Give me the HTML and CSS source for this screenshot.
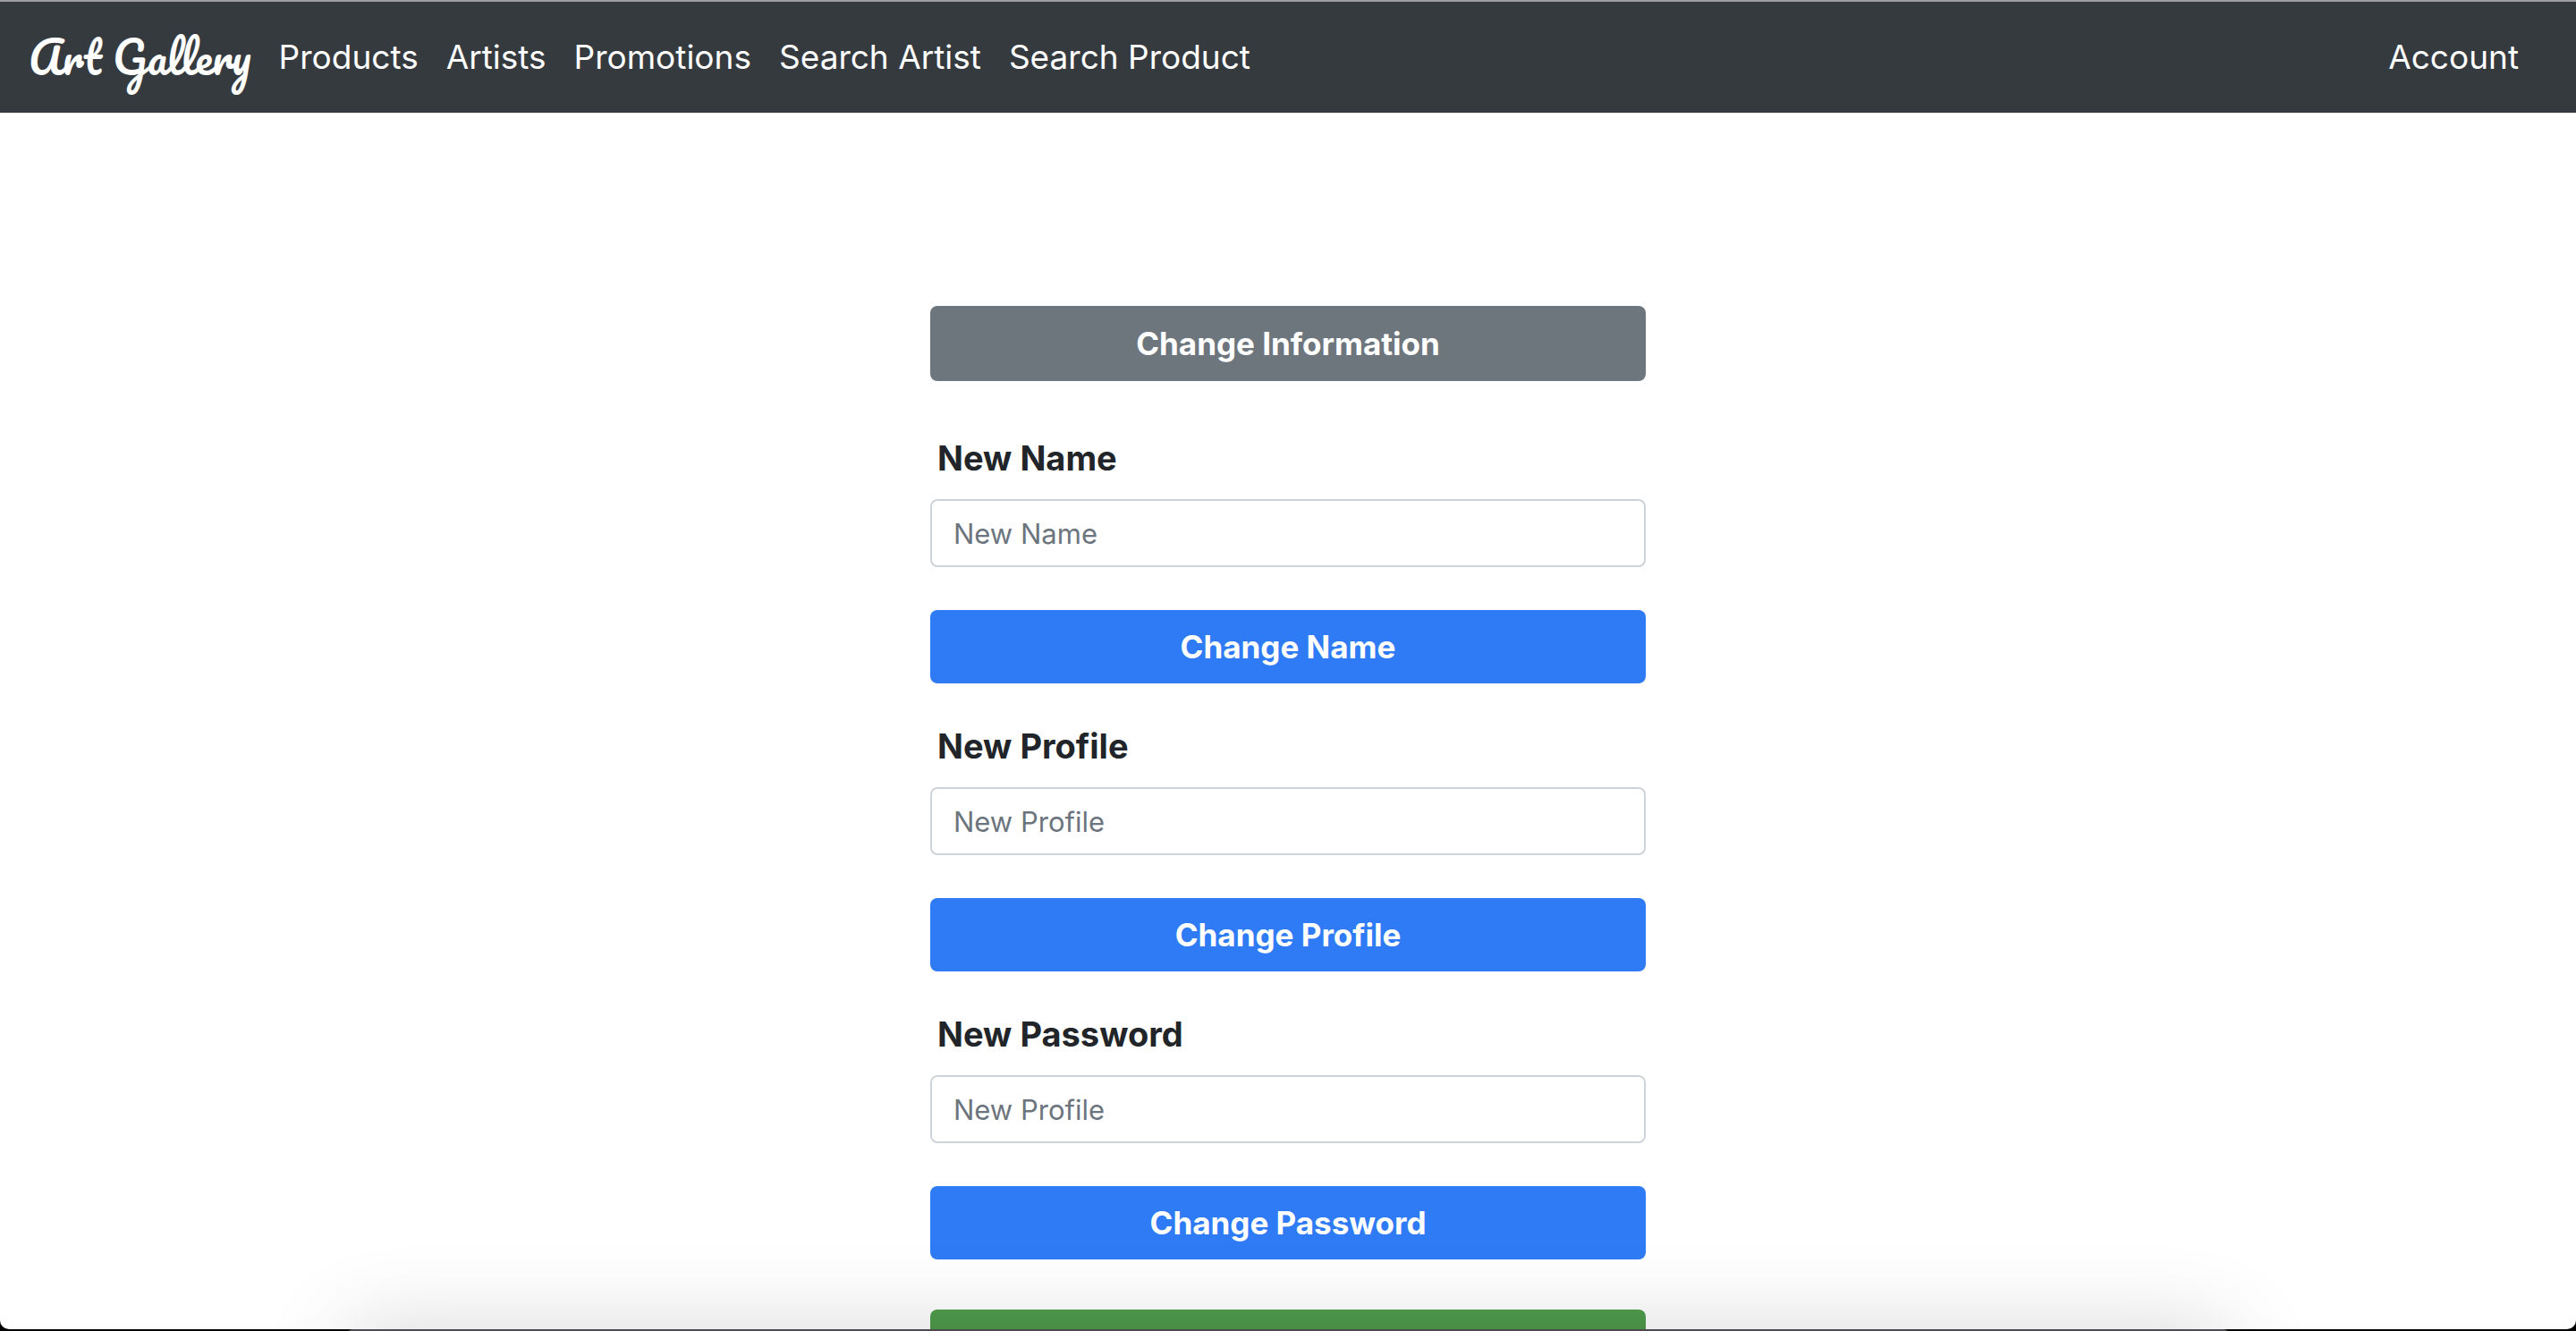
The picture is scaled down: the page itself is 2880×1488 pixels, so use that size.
FILE: index.html
```html
<!DOCTYPE html>
<html lang="en">
<head>
<meta charset="utf-8">
<title>Art Gallery</title>
<link rel="stylesheet" href="styles.css">
</head>
<body>
<div class="window">
  <header class="navbar">
    <a class="brand" href="#">Art Gallery</a>
    <nav class="nav">
      <a class="nav-link" href="#">Products</a>
      <a class="nav-link" href="#">Artists</a>
      <a class="nav-link" href="#">Promotions</a>
      <a class="nav-link" href="#">Search Artist</a>
      <a class="nav-link" href="#">Search Product</a>
      <a class="nav-link account" href="#">Account</a>
    </nav>
  </header>
  <main class="content">
    <button class="btn btn-secondary" type="button">Change Information</button>
    <form class="group">
      <label class="label" for="name">New Name</label>
      <input class="field" id="name" type="text" placeholder="New Name">
      <button class="btn btn-primary" type="button">Change Name</button>
    </form>
    <form class="group">
      <label class="label" for="profile">New Profile</label>
      <input class="field" id="profile" type="text" placeholder="New Profile">
      <button class="btn btn-primary" type="button">Change Profile</button>
    </form>
    <form class="group">
      <label class="label" for="password">New Password</label>
      <input class="field" id="password" type="password" placeholder="New Profile">
      <button class="btn btn-primary" type="button">Change Password</button>
    </form>
    <button class="btn btn-success" type="button"></button>
  </main>
</div>
<div class="dock"></div>
</body>
</html>
```
FILE: styles.css
```css
* {
  box-sizing: border-box;
}

body {
  margin: 0;
  background: #000;
  color: #212529;
  font-family: Inter, "Liberation Sans", sans-serif;
  overflow: hidden;
}

.window {
  height: calc(100vh - 2px);
  overflow: auto;
  scrollbar-width: none;
  background: #fff;
  border-radius: 0 0 10px 10px;
}

.navbar {
  display: flex;
  align-items: center;
  gap: 31px;
  min-height: 126px;
  padding: 0 64px 0 32px;
  background: #353a3f;
  border-top: 2px solid #9b9da0;
}

.brand {
  color: #fff;
  font-family: Pacifico, Lato, cursive;
  font-size: 48px;
  font-weight: 400;
  line-height: 60px;
  text-decoration: none;
  white-space: nowrap;
}

.nav {
  display: flex;
  flex: 1;
  gap: 31px;
}

.nav-link {
  color: #fff;
  font-size: 37px;
  line-height: 60px;
  text-decoration: none;
  white-space: nowrap;
}

.account {
  margin-left: auto;
}

.content {
  display: flex;
  flex-direction: column;
  width: 100%;
  max-width: 800px;
  margin: 0 auto;
  padding: 216px 0 64px;
}

.btn {
  width: 100%;
  min-height: 82px;
  padding: 12px 24px;
  border: 0;
  border-radius: 8px;
  color: #fff;
  font-family: inherit;
  font-size: 35px;
  font-weight: 700;
  line-height: 56px;
}

.btn-secondary {
  min-height: 84px;
  margin-bottom: 16px;
  background: #6d757d;
}

.btn-primary {
  background: #2f7bf6;
}

.btn-success {
  margin-top: 56px;
  background: #4f9c4c;
}

.group {
  display: flex;
  flex-direction: column;
  padding-top: 40px;
}

.label {
  margin-bottom: 16px;
  padding-left: 8px;
  font-size: 38px;
  font-weight: 700;
  line-height: 60px;
}

.field {
  width: 100%;
  height: 76px;
  margin-bottom: 48px;
  padding: 0 24px;
  border: 2px solid #ced4da;
  border-radius: 8px;
  background: #fff;
  color: #495057;
  font-family: inherit;
  font-size: 31px;
}

.field::placeholder {
  color: #6c757d;
  opacity: 1;
}

/* Dock peeking in below the window */
.dock {
  position: fixed;
  right: 388px;
  bottom: -198px;
  left: 388px;
  height: 200px;
  border-radius: 6px;
  background: #4d4b50;
  box-shadow: 0 0 100px rgba(0, 0, 0, 0.16);
  pointer-events: none;
}
```
